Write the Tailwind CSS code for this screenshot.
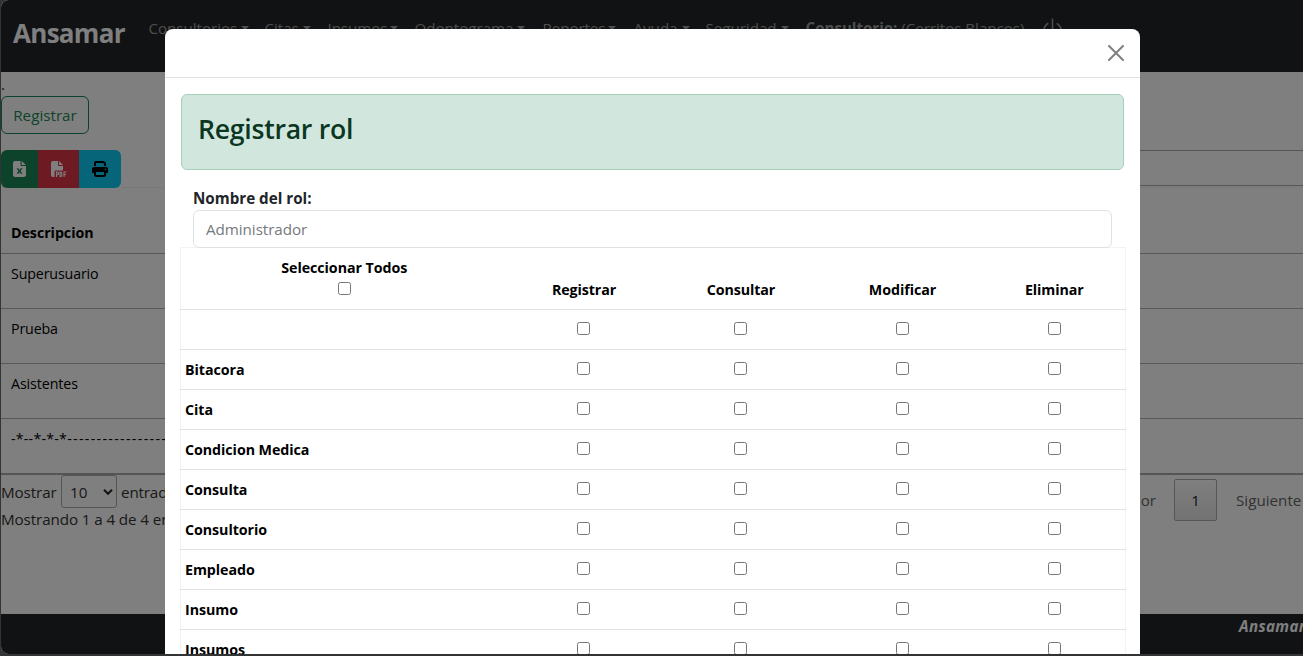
<!DOCTYPE html>
<html lang="es">
<head>
<meta charset="utf-8">
<title>Ansamar</title>
<script src="https://cdn.jsdelivr.net/npm/@tailwindcss/browser@4"></script>
</head>
<body class="h-[656px] w-[1303px] overflow-hidden bg-[#333435] pb-[2px] pl-px font-['Open_Sans','Noto_Sans',sans-serif] text-[15.2px] leading-6 text-[#212529]">
<div class="relative flex h-[654px] flex-col overflow-hidden rounded-l-[8px] bg-white">
  <nav class="flex h-[72px] shrink-0 bg-[#212529] pl-3 text-[#9b9d9e] whitespace-nowrap">
    <div class="w-[135.5px] pt-[13px] text-[26px] leading-[40px] font-bold tracking-[-0.7px] text-white">Ansamar</div>
    <div class="flex pt-4 tracking-[-0.05px]">
      <div class="flex w-[116px] gap-1">Consultorios<i class="mt-[10px] h-0 border-x-[4.5px] border-t-[4.5px] border-x-transparent"></i></div>
      <div class="flex w-[63px] gap-1">Citas<i class="mt-[10px] h-0 border-x-[4.5px] border-t-[4.5px] border-x-transparent"></i></div>
      <div class="flex w-[87px] gap-[3px] tracking-[-0.1px]">Insumos<i class="mt-[10px] h-0 border-x-[4.5px] border-t-[4.5px] border-x-transparent"></i></div>
      <div class="flex w-[128px] gap-1">Odontograma<i class="mt-[10px] h-0 border-x-[4.5px] border-t-[4.5px] border-x-transparent"></i></div>
      <div class="flex w-[91px] gap-[3px] tracking-[-0.1px]">Reportes<i class="mt-[10px] h-0 border-x-[4.5px] border-t-[4.5px] border-x-transparent"></i></div>
      <div class="flex w-[72px] gap-1">Ayuda<i class="mt-[10px] h-0 border-x-[4.5px] border-t-[4.5px] border-x-transparent"></i></div>
      <div class="flex w-[100px] gap-1">Seguridad<i class="mt-[10px] h-0 border-x-[4.5px] border-t-[4.5px] border-x-transparent"></i></div>
      <div class="w-[234px]"><b>Consultorio:</b> (Cerritos Blancos)</div>
      <svg class="mt-[1px] h-[25px] w-[25px]" viewBox="0 0 16 16" fill="currentColor"><path d="M7.5 1v7h1V1z"/><path d="M3 8.812a5 5 0 0 1 2.578-4.375l-.485-.874A6 6 0 1 0 11 3.616l-.501.865A5 5 0 1 1 3 8.812"/></svg>
    </div>
  </nav>
  <main class="flex h-[542px] shrink-0 flex-col">
    <div class="h-6 text-[#212529]">.</div>
    <button class="h-[38px] w-[88px] rounded-md border border-[#198754] text-[#198754]">Registrar</button>
    <div class="mt-4 flex h-[38px]">
      <div class="flex overflow-hidden rounded-md">
        <div class="flex w-[37px] items-center justify-center bg-[#198754] text-white">
          <svg class="h-4 w-[13px]" viewBox="0 0 384 512" preserveAspectRatio="none" fill="currentColor"><path d="M64 0C29 0 0 29 0 64v384c0 35 29 64 64 64h256c35 0 64-29 64-64V160H256c-18 0-32-14-32-32V0zM256 0v128h128zM156 233l36 53 36-53h54l-61 87 61 88h-54l-36-52-36 52h-54l61-88-61-87z" fill-rule="evenodd"/></svg>
        </div>
        <div class="flex w-[41px] items-center justify-center bg-[#dc3545] text-white">
          <svg class="h-4 w-4" viewBox="0 0 512 512" fill="none"><path fill="currentColor" d="M64 0C29 0 0 29 0 64v384c0 35 29 64 64 64h48V352c0-26 22-48 48-48h224V160H256c-18 0-32-14-32-32V0zM256 0v128h128z"/><path stroke="currentColor" stroke-width="36" d="M176 512V352h25a36 36 0 0 1 0 88h-25M290 352v144h20q34 0 34-34v-76q0-34-34-34zM416 512V352h74M416 430h66"/></svg>
        </div>
        <div class="flex w-[42px] items-center justify-center bg-[#0dcaf0] text-black">
          <svg class="h-4 w-4" viewBox="0 0 512 512" fill="currentColor"><path d="M128 0C93 0 64 29 64 64v96h64V64h227l29 29v67h64V93c0-17-7-33-19-45L400 19C388 7 372 0 355 0zM384 352v96H128v-96zm64 32h32c18 0 32-14 32-32v-96c0-35-29-64-64-64H64c-35 0-64 29-64 64v96c0 18 14 32 32 32h32v64c0 35 29 64 64 64h256c35 0 64-29 64-64zM432 248a24 24 0 1 1 0 48 24 24 0 0 1 0-48" fill-rule="evenodd"/></svg>
        </div>
      </div>
      <div class="flex grow flex-col border-b border-[#f3f3f3] pl-[700px]">
        <div class="h-9 border-y border-[#aaaaaa]"></div>
      </div>
    </div>
    <table class="w-full shrink-0 border-b-2 border-[#aaaaaa] text-[14.25px] text-black">
      <tr class="h-[65px] border-b border-[#b3b3b3]"><th class="pt-[26px] pl-[10px] text-left tracking-[-0.05px]">Descripcion</th></tr>
      <tr class="h-[55px] border-b border-[#b3b3b3] align-top"><td class="pt-2 pl-[10px] tracking-[-0.15px]">Superusuario</td></tr>
      <tr class="h-[55px] border-b border-[#b3b3b3] align-top"><td class="pt-2 pl-[10px] tracking-[-0.15px]">Prueba</td></tr>
      <tr class="h-[55px] border-b border-[#b3b3b3] align-top"><td class="pt-2 pl-[10px] tracking-[-0.1px]">Asistentes</td></tr>
      <tr class="h-[56px] align-top"><td class="pt-2 pl-[10px] tracking-[1.3px]"><span class="tracking-[0.2px]">-*--*-*-*</span>---------------------</td></tr>
    </table>
    <div class="flex justify-between text-[#333333]">
      <div>
        <div class="flex h-[33px] items-center">
          <span class="w-[60px] pt-px tracking-[-0.1px]">Mostrar</span>
          <span class="flex h-[33px] w-[56px] items-center justify-between rounded-[3px] border border-[#aaaaaa] pr-[3px] pl-2">10
            <svg class="h-[6px] w-[10px]" viewBox="0 0 10 6" fill="none" stroke="#212529" stroke-width="2"><path d="M1 .8 5 4.8 9 .8"/></svg></span>
          <span class="pt-px pl-1 tracking-[-0.15px]">entradas</span>
        </div>
        <div class="-mt-px tracking-[-0.1px]">Mostrando 1 a 4 de 4 entradas</div>
      </div>
      <div class="mt-[4px] flex h-[42px] items-center text-[#666666]">
        <span class="pr-[18px]">Anterior</span>
        <span class="flex h-[42px] w-[43px] items-center justify-center rounded-[2px] border border-[#adadad] bg-gradient-to-b from-white to-[#e6e6e6] text-[#212529]">1</span>
        <span class="w-[86px] pl-[19px]">Siguiente</span>
      </div>
    </div>
  </main>
  <footer class="flex grow justify-end bg-[#212529] text-white"><b class="w-[64px] tracking-[0.35px] italic">Ansamar</b></footer>

  <div class="absolute inset-0 bg-black/50"></div>

  <section class="absolute top-[29px] left-[164px] flex h-[640px] w-[975px] flex-col rounded-t-lg bg-white">
    <header class="flex h-[49px] shrink-0 items-center justify-end border-b border-[#dee2e6] pr-4">
      <svg class="h-4 w-4" viewBox="0 0 16 16" fill="#808080"><path d="M.293.293a1 1 0 0 1 1.414 0L8 6.586 14.293.293a1 1 0 1 1 1.414 1.414L9.414 8l6.293 6.293a1 1 0 0 1-1.414 1.414L8 9.414l-6.293 6.293a1 1 0 0 1-1.414-1.414L6.586 8 .293 1.707a1 1 0 0 1 0-1.414"/></svg>
    </header>
    <div class="px-4 pt-4">
      <div class="h-[76px] rounded-md border border-[#a3cfbb] bg-[#d1e7dd] pt-[17px] pl-4"><h3 class="text-[26.6px] leading-[34px] font-semibold tracking-[-0.25px] text-[#0a3622]">Registrar rol</h3></div>
      <div class="px-3 pt-4">
        <label class="block font-bold">Nombre del rol:</label>
        <div class="relative z-10 h-[38px] rounded-md border border-[#dee2e6] pt-[6px] pl-3 tracking-[-0.05px] text-[#75797d]">Administrador</div>
      </div>
      <table class="-mt-px -ml-px w-[945px] table-fixed border border-[#f3f3f3] text-center text-[14.25px] font-bold tracking-[-0.06px] text-black">
        <colgroup><col class="w-[326px]"><col class="w-[153px]"><col class="w-[161px]"><col class="w-[163px]"><col class="w-[142px]"></colgroup>
        <thead><tr class="h-[62px] border-b border-[#dee2e6] align-bottom"><th class="pb-[14px] pl-px leading-[22px]">Seleccionar Todos<span class="mx-auto mt-[3px] block h-[13px] w-[13px] rounded-[2.5px] border border-[#767676]"></span></th><th class="pb-[7px] pl-[2px] tracking-[-0.1px]">Registrar</th><th class="pb-[7px] pl-[2px] tracking-[-0.1px]">Consultar</th><th class="pb-[7px] pl-px">Modificar</th><th class="pb-[7px] tracking-[-0.1px]">Eliminar</th></tr></thead>
        <tbody id="permisos"></tbody>
      </table>
    </div>
  </section>
</div>
<script>
const box = '<td><span class="mx-auto -mt-[2px] block h-[13px] w-[13px] rounded-[2.5px] border border-[#767676]"></span></td>';
document.getElementById('permisos').innerHTML = ['', 'Bitacora', 'Cita', 'Condicion Medica', 'Consulta', 'Consultorio', 'Empleado', 'Insumo', 'Insumos']
  .map(n => `<tr class="h-10 border-b border-[#dee2e6]"><td class="pl-1 text-left">${n}</td>${box.repeat(4)}</tr>`).join('');
</script>
</body>
</html>
